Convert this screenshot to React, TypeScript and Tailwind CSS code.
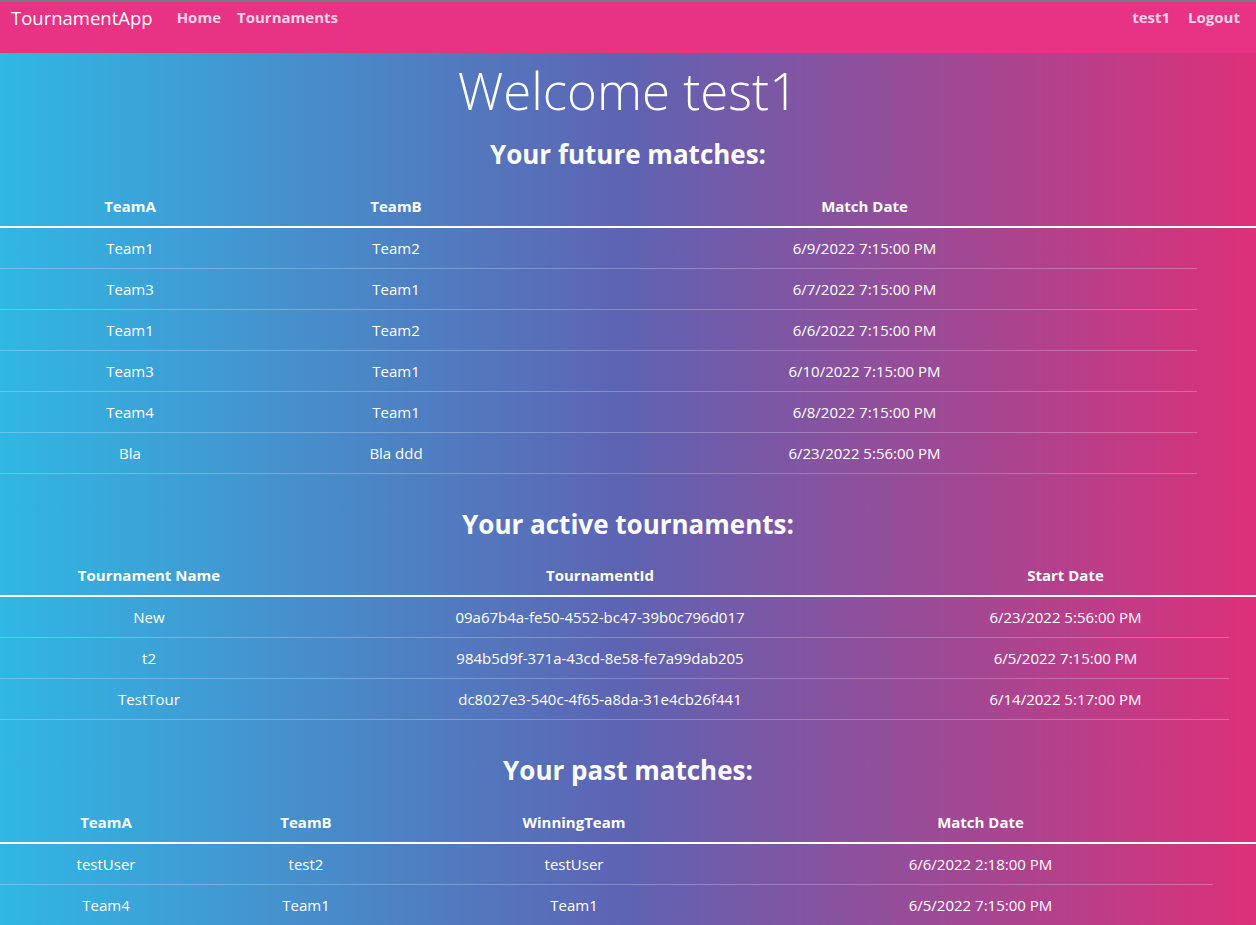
import React from "react";

const font = { fontFamily: '"Open Sans", "Noto Sans", sans-serif' };

type Col = { title: string; width: string };

const futureCols: Col[] = [
  { title: "TeamA", width: "w-[260px]" },
  { title: "TeamB", width: "w-[272px]" },
  { title: "Match Date", width: "w-[665px]" },
];

const futureRows = [
  ["Team1", "Team2", "6/9/2022 7:15:00 PM"],
  ["Team3", "Team1", "6/7/2022 7:15:00 PM"],
  ["Team1", "Team2", "6/6/2022 7:15:00 PM"],
  ["Team3", "Team1", "6/10/2022 7:15:00 PM"],
  ["Team4", "Team1", "6/8/2022 7:15:00 PM"],
  ["Bla", "Bla ddd", "6/23/2022 5:56:00 PM"],
];

const tourCols: Col[] = [
  { title: "Tournament Name", width: "w-[298px]" },
  { title: "TournamentId", width: "w-[604px]" },
  { title: "Start Date", width: "w-[327px]" },
];

const tourRows = [
  ["New", "09a67b4a-fe50-4552-bc47-39b0c796d017", "6/23/2022 5:56:00 PM"],
  ["t2", "984b5d9f-371a-43cd-8e58-fe7a99dab205", "6/5/2022 7:15:00 PM"],
  ["TestTour", "dc8027e3-540c-4f65-a8da-31e4cb26f441", "6/14/2022 5:17:00 PM"],
];

const pastCols: Col[] = [
  { title: "TeamA", width: "w-[212px]" },
  { title: "TeamB", width: "w-[188px]" },
  { title: "WinningTeam", width: "w-[348px]" },
  { title: "Match Date", width: "w-[465px]" },
];

const pastRows = [
  ["testUser", "test2", "testUser", "6/6/2022 2:18:00 PM"],
  ["Team4", "Team1", "Team1", "6/5/2022 7:15:00 PM"],
];

function MatchTable({ cols, rows }: { cols: Col[]; rows: string[][] }) {
  return (
    <div className="w-full">
      <div className="flex border-b-2 border-white h-[40px] items-center pb-[2px]">
        {cols.map((c) => (
          <div key={c.title} className={`${c.width} shrink-0 text-center text-[15px] font-bold`}>
            {c.title}
          </div>
        ))}
      </div>
      {rows.map((r, i) => (
        <div key={i} className="flex w-fit border-b border-white/25 h-[41px] items-center">
          {r.map((v, j) => (
            <div key={j} className={`${cols[j].width} shrink-0 text-center text-[15px] pt-[1px]`}>
              {v}
            </div>
          ))}
        </div>
      ))}
    </div>
  );
}

export default function App() {
  return (
    <div
      className="min-h-[925px] w-full text-white bg-[linear-gradient(to_right,#30b7e4_0%,#5e63b2_50%,#dd3079_100%)]"
      style={font}
    >
      <nav className="h-[53px] bg-[#e83283] border-t-2 border-[#7b7b85] flex justify-between px-[11px] pt-[3px]">
        <div className="flex items-start gap-[24px]">
          <span className="text-[18.5px] leading-[26px]">TournamentApp</span>
          <div className="flex gap-[16px] text-[15px] font-bold text-[#fbd3e6] leading-[22px] pt-[1px]">
            <span>Home</span>
            <span>Tournaments</span>
          </div>
        </div>
        <div className="flex gap-[18px] text-[15px] font-bold text-[#fbd3e6] leading-[22px] pt-[1px] pr-[5px]">
          <span>test1</span>
          <span>Logout</span>
        </div>
      </nav>

      <main className="flex flex-col items-center">
        <h1 className="text-[51px] font-light leading-[72px] mt-[1px]">Welcome test1</h1>
        <h2 className="text-[26px] font-bold leading-[36px] mt-[10px] mb-[16px]">Your future matches:</h2>
        <MatchTable cols={futureCols} rows={futureRows} />

        <h2 className="text-[26px] font-bold leading-[36px] mt-[32px] mb-[15px]">Your active tournaments:</h2>
        <MatchTable cols={tourCols} rows={tourRows} />

        <h2 className="text-[26px] font-bold leading-[36px] mt-[32px] mb-[16px]">Your past matches:</h2>
        <MatchTable cols={pastCols} rows={pastRows} />
      </main>
    </div>
  );
}
